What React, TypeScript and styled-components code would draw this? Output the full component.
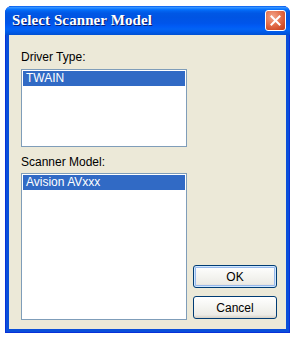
import React from "react";
import styled, { createGlobalStyle } from "styled-components";

const Global = createGlobalStyle`
  html, body { margin: 0; padding: 0; background: #ffffff; }
  body { font-family: "Liberation Sans", Arial, sans-serif; }
`;

const Page = styled.div`
  width: 295px;
  height: 337px;
  padding: 6px 5px 4px 5px;
  box-sizing: border-box;
  display: flex;
`;

const Window = styled.div`
  flex: 1;
  display: flex;
  flex-direction: column;
  background: #0a4fd9;
  border-radius: 7px 7px 0 0;
  overflow: hidden;
  box-shadow: inset 0 0 0 1px #0831d9;
`;

const TitleBar = styled.div`
  height: 29px;
  display: flex;
  align-items: center;
  justify-content: space-between;
  padding: 0 4px 0 7px;
  background: linear-gradient(
    180deg,
    #0058ee 0%,
    #3593ff 5%,
    #1a82ff 9%,
    #036ffc 13%,
    #0262ee 18%,
    #0057e5 26%,
    #0054e3 40%,
    #0055eb 60%,
    #005bf5 70%,
    #0263f5 80%,
    #005ae8 90%,
    #0050d2 100%
  );
`;

const Title = styled.span`
  font-family: "Liberation Serif", "Times New Roman", serif;
  font-weight: bold;
  font-size: 15px;
  color: #ffffff;
  text-shadow: 1px 1px 0 #0a1e6e;
  letter-spacing: 0.1px;
`;

const CloseButton = styled.div`
  width: 21px;
  height: 21px;
  box-sizing: border-box;
  border: 1px solid #ffffff;
  border-radius: 3px;
  background: radial-gradient(circle at 35% 30%, #f3a58a 0%, #e4704c 45%, #cf4a26 80%, #c23d1c 100%);
  display: flex;
  align-items: center;
  justify-content: center;
`;

const Body = styled.div`
  flex: 1;
  margin: 0 4px 4px 4px;
  background: #ece9d8;
  display: grid;
  grid-template-columns: 166px 84px;
  column-gap: 6px;
  padding: 15px 10px 8px 12px;
`;

const LeftCol = styled.div`
  display: flex;
  flex-direction: column;
`;

const Label = styled.div<{ $top: number; $bottom: number }>`
  font-size: 12px;
  line-height: 14px;
  color: #000000;
  margin-top: ${(p) => p.$top}px;
  margin-bottom: ${(p) => p.$bottom}px;
`;

const ListBox = styled.div<{ $h: number }>`
  height: ${(p) => p.$h}px;
  box-sizing: border-box;
  background: #ffffff;
  border: 1px solid #7f9db9;
  padding: 1px;
`;

const Item = styled.div<{ $selected?: boolean }>`
  height: 15px;
  line-height: 15px;
  font-size: 12px;
  padding-left: 3px;
  color: ${(p) => (p.$selected ? "#ffffff" : "#000000")};
  background: ${(p) => (p.$selected ? "#316ac5" : "transparent")};
`;

const RightCol = styled.div`
  display: flex;
  flex-direction: column;
  justify-content: flex-end;
  gap: 8px;
  padding-bottom: 2px;
`;

const Button = styled.button<{ $default?: boolean }>`
  height: 23px;
  width: 84px;
  box-sizing: border-box;
  border: 1px solid #003c74;
  border-radius: 3px;
  background: linear-gradient(180deg, #ffffff 0%, #f4f4f0 50%, #ecebe6 85%, #d6d0c5 100%);
  font-family: "Liberation Sans", Arial, sans-serif;
  font-size: 12px;
  color: #000000;
  padding: 0;
  box-shadow: ${(p) =>
    p.$default ? "inset 0 0 0 1px #cee7ff, inset 0 0 0 2px #98b8ea" : "none"};
`;

export default function App() {
  return (
    <>
      <Global />
      <Page>
        <Window>
          <TitleBar>
            <Title>Select Scanner Model</Title>
            <CloseButton>
              <svg width="11" height="11" viewBox="0 0 11 11">
                <path d="M1.5 1.5 L9.5 9.5 M9.5 1.5 L1.5 9.5" stroke="#ffffff" strokeWidth="2" strokeLinecap="square" />
              </svg>
            </CloseButton>
          </TitleBar>
          <Body>
            <LeftCol>
              <Label $top={0} $bottom={5}>Driver Type:</Label>
              <ListBox $h={78}>
                <Item $selected>TWAIN</Item>
              </ListBox>
              <Label $top={8} $bottom={4}>Scanner Model:</Label>
              <ListBox $h={147}>
                <Item $selected>Avision AVxxx</Item>
              </ListBox>
            </LeftCol>
            <RightCol>
              <Button $default>OK</Button>
              <Button>Cancel</Button>
            </RightCol>
          </Body>
        </Window>
      </Page>
    </>
  );
}
